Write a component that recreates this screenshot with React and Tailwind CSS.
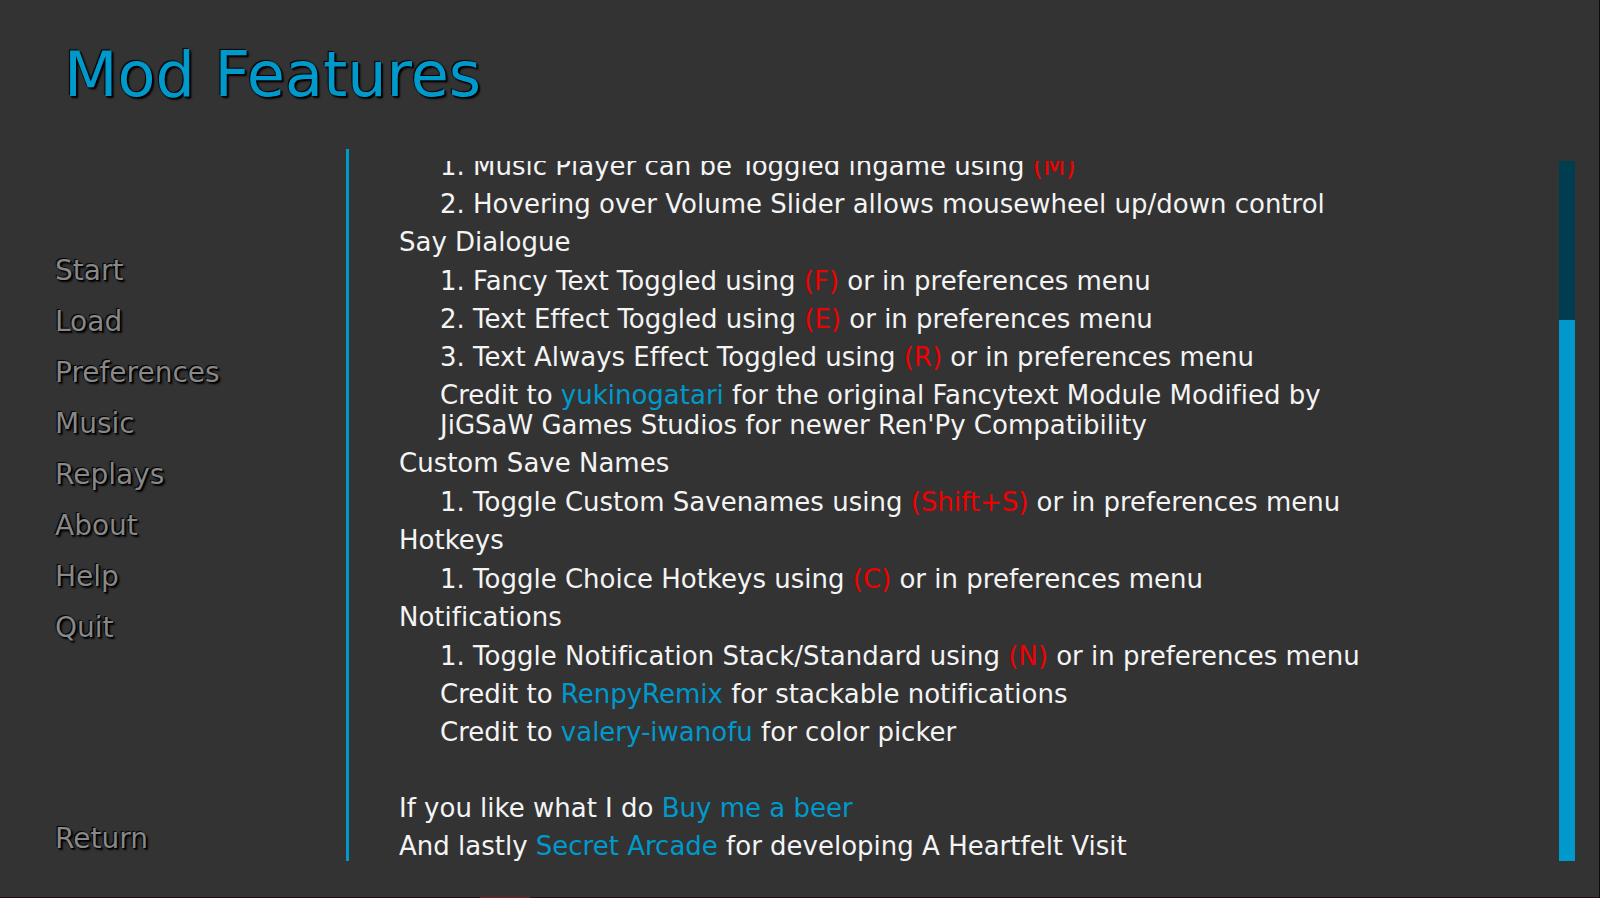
const nav = ['Start', 'Load', 'Preferences', 'Music', 'Replays', 'About', 'Help', 'Quit'];

const Key = ({ children }) => <span className="text-[#f00000]">{children}</span>;
const Link = ({ children }) => <a href="#" className="text-[#0099cc]">{children}</a>;
const Heading = ({ children }) => <h2 className="mb-[9px]">{children}</h2>;
const Item = ({ children }) => <p className="mb-2 ml-[41px]">{children}</p>;

export default function App() {
  return (
    <main className="flex min-h-screen flex-col border-r border-[#0c0c0c] bg-[#333333] font-['DejaVu_Sans',sans-serif] [font-variant-ligatures:none]">
      <h1 className="h-[149px] pl-16 pt-[38px] text-[62px] leading-[74px] text-[#0099cc] [text-shadow:-1px_-1px_1px_#000,1px_1px_1px_#000,2px_2px_2px_#000]">Mod Features</h1>
      <div className="flex h-[712px]">
        <nav className="flex w-[349px] flex-col items-start border-r-[3px] border-[#0099cc] pl-[55px] text-[28px] leading-[31px] text-[#888888]">
          <div className="flex flex-col items-start gap-5 pt-[106px]">
            {nav.map((n) => <button key={n} type="button" className="[text-shadow:-1px_-1px_1px_#000,1px_1px_1px_#000,2px_2px_2px_#000]">{n}</button>)}
          </div>
          <button type="button" className="mb-[7px] mt-auto [text-shadow:-1px_-1px_1px_#000,1px_1px_1px_#000,2px_2px_2px_#000]">Return</button>
        </nav>
        <section className="mt-3 flex flex-1 flex-col justify-end overflow-hidden pl-[50px] text-[26px] leading-[30px] text-[#f4f4f4]">
          <Item>1. Music Player can be Toggled ingame using <Key>(M)</Key></Item>
          <Item>2. Hovering over Volume Slider allows mousewheel up/down control</Item>
          <Heading>Say Dialogue</Heading>
          <Item>1. Fancy Text Toggled using <Key>(F)</Key> or in preferences menu</Item>
          <Item>2. Text Effect Toggled using <Key>(E)</Key> or in preferences menu</Item>
          <Item>3. Text Always Effect Toggled using <Key>(R)</Key> or in preferences menu</Item>
          <Item>Credit to <Link>yukinogatari</Link> for the original Fancytext Module Modified by<br />JiGSaW Games Studios for newer Ren'Py Compatibility</Item>
          <Heading>Custom Save Names</Heading>
          <Item>1. Toggle Custom Savenames using <Key>(Shift+S)</Key> or in preferences menu</Item>
          <Heading>Hotkeys</Heading>
          <Item>1. Toggle Choice Hotkeys using <Key>(C)</Key> or in preferences menu</Item>
          <Heading>Notifications</Heading>
          <Item>1. Toggle Notification Stack/Standard using <Key>(N)</Key> or in preferences menu</Item>
          <Item>Credit to <Link>RenpyRemix</Link> for stackable notifications</Item>
          <Item>Credit to <Link>valery-iwanofu</Link> for color picker</Item>
          <p className="mb-2 mt-[38px]">If you like what I do <Link>Buy me a beer</Link></p>
          <p>And lastly <Link>Secret Arcade</Link> for developing A Heartfelt Visit</p>
        </section>
        <div className="mr-6 mt-3 flex w-4 flex-col bg-[#0099cc]">
          <div className="h-[159px] bg-[#003d51]" />
        </div>
      </div>
      <div className="mt-auto flex h-px bg-[#2a0d12] pl-[480px]">
        <div className="w-[50px] bg-[#7a1c26]" />
      </div>
    </main>
  );
}
